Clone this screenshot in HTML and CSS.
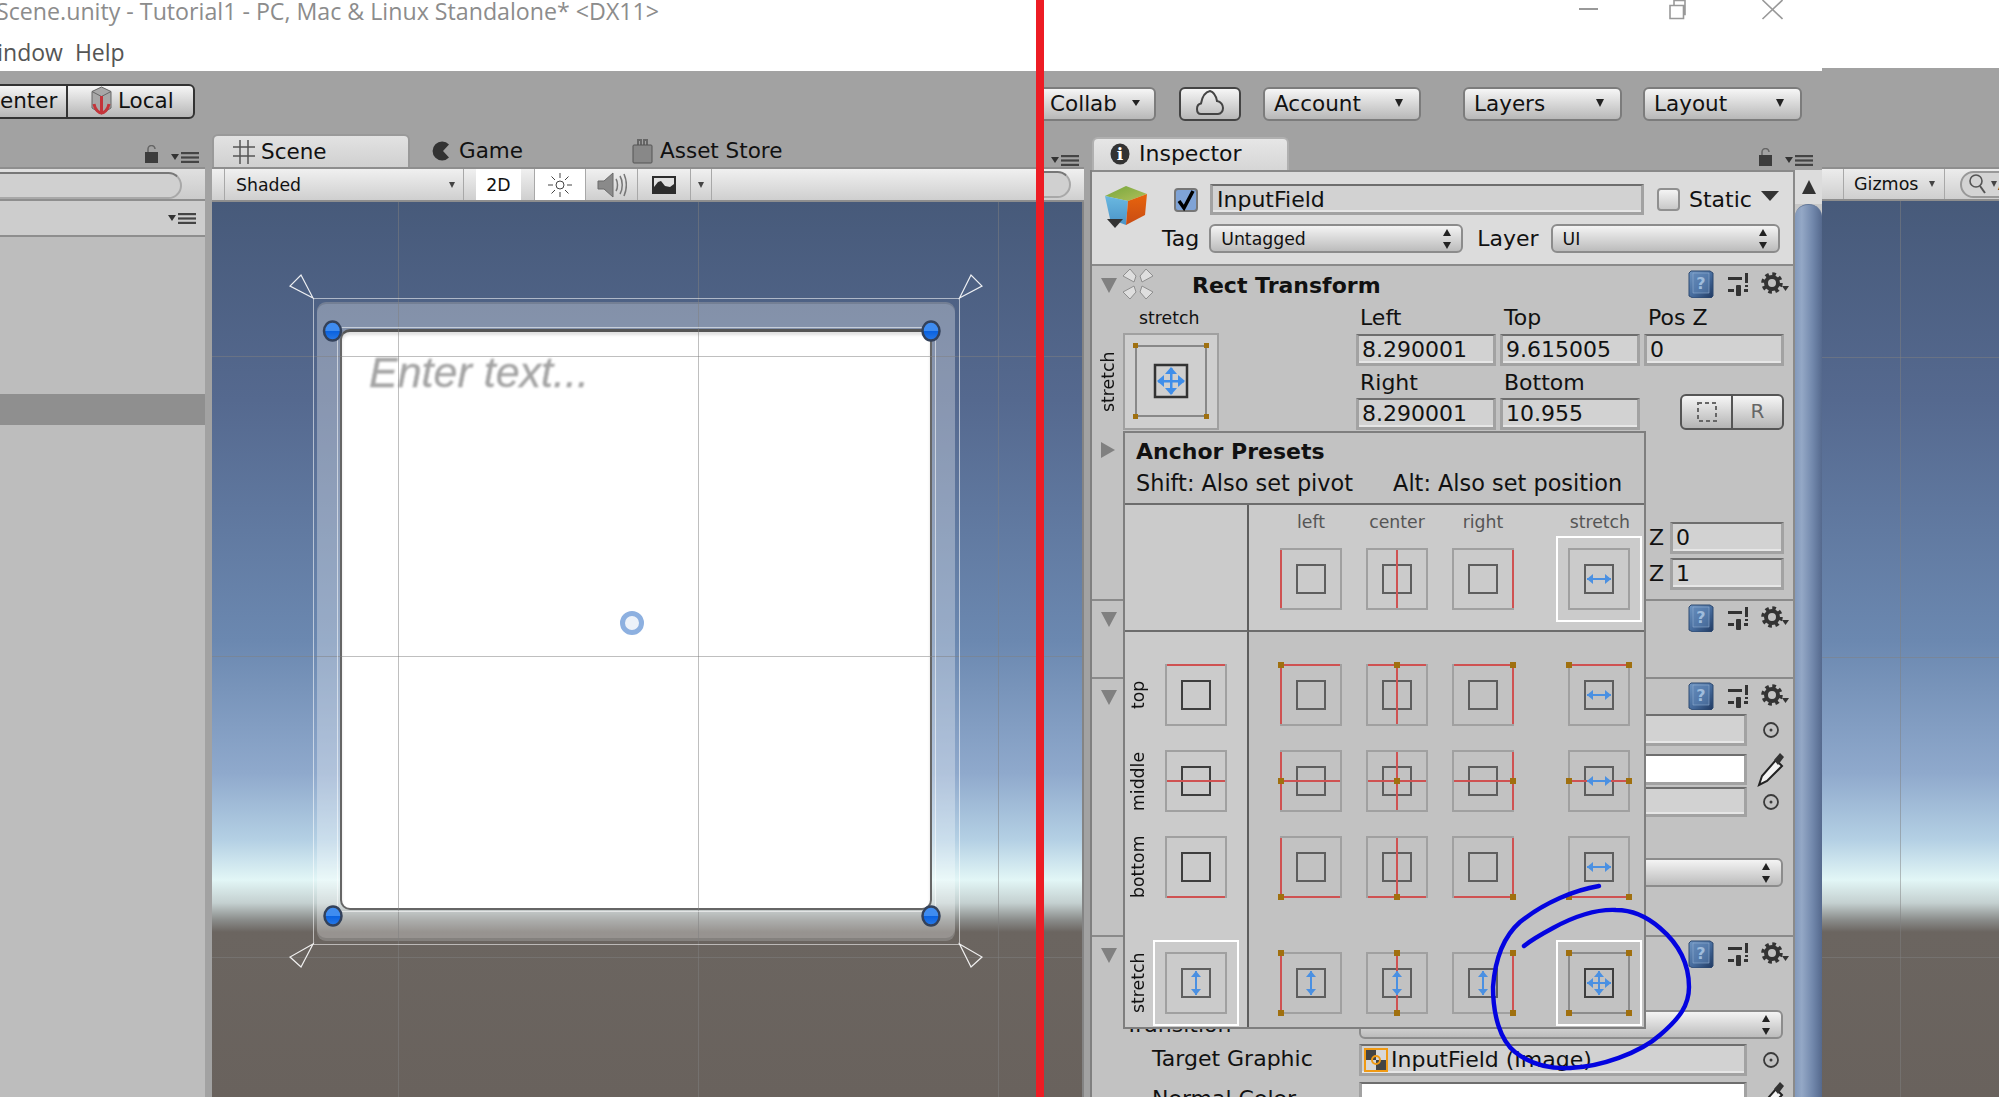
FILE: index.html
```html
<!DOCTYPE html>
<html lang="en">
<head>
<meta charset="utf-8">
<title>Unity Editor - Anchor Presets</title>
<link rel="stylesheet" href="styles.css">
</head>
<body>
<svg class="defs" width="0" height="0" aria-hidden="true">
  <defs>
    <linearGradient id="bookG" x1="0" y1="0" x2="1" y2="1"><stop offset="0" stop-color="#6f96c4"/><stop offset=".55" stop-color="#44699a"/><stop offset="1" stop-color="#1f3860"/></linearGradient>
    <linearGradient id="dotG" x1="0" y1="0" x2="0" y2="1"><stop offset="0" stop-color="#3f8cf0"/><stop offset=".5" stop-color="#3f8cf0"/><stop offset=".52" stop-color="#0a62e0"/><stop offset="1" stop-color="#2a7ae8"/></linearGradient>
    <linearGradient id="cubeT" x1="0" y1="0" x2="1" y2="1"><stop offset="0" stop-color="#76a63c"/><stop offset="1" stop-color="#b0c05a"/></linearGradient>
    <linearGradient id="cubeL" x1="0" y1="0" x2="0" y2="1"><stop offset="0" stop-color="#6ab8e0"/><stop offset="1" stop-color="#4a94c8"/></linearGradient>
    <linearGradient id="cubeR" x1="0" y1="0" x2="0" y2="1"><stop offset="0" stop-color="#e8640c"/><stop offset="1" stop-color="#c84c14"/></linearGradient>

    <g id="box"><rect x="7" y="7" width="60" height="60" fill="none" stroke="#a0a0a0" stroke-width="2"/></g>
    <g id="box2"><rect x="7" y="7" width="60" height="60" fill="none" stroke="#8c8c8c" stroke-width="2"/></g>
    <g id="inner"><rect x="23" y="23" width="28" height="28" fill="none" stroke="#5e5e5e" stroke-width="2"/></g>
    <g id="inner2"><rect x="23" y="23" width="28" height="28" fill="none" stroke="#3e3e3e" stroke-width="2"/></g>
    <rect id="vl" x="6" y="8" width="2" height="58" fill="#cf5252"/>
    <rect id="vc" x="36" y="8" width="2" height="58" fill="#cf5252"/>
    <rect id="vr" x="66" y="8" width="2" height="58" fill="#cf5252"/>
    <rect id="ht" x="8" y="6" width="58" height="2" fill="#cf5252"/>
    <rect id="hm" x="8" y="36" width="58" height="2" fill="#cf5252"/>
    <rect id="hb" x="8" y="66" width="58" height="2" fill="#cf5252"/>
    <rect id="p11" x="4" y="4" width="6" height="6" fill="#a0700f"/>
    <rect id="p21" x="34" y="4" width="6" height="6" fill="#a0700f"/>
    <rect id="p31" x="64" y="4" width="6" height="6" fill="#a0700f"/>
    <rect id="p12" x="4" y="34" width="6" height="6" fill="#a0700f"/>
    <rect id="p22" x="34" y="34" width="6" height="6" fill="#a0700f"/>
    <rect id="p32" x="64" y="34" width="6" height="6" fill="#a0700f"/>
    <rect id="p13" x="4" y="64" width="6" height="6" fill="#a0700f"/>
    <rect id="p23" x="34" y="64" width="6" height="6" fill="#a0700f"/>
    <rect id="p33" x="64" y="64" width="6" height="6" fill="#a0700f"/>
    <g id="ah" fill="#4a90e2"><rect x="25" y="36" width="24" height="2"/><polygon points="25,37 31,32 31,42"/><polygon points="49,37 43,32 43,42"/></g>
    <g id="av" fill="#4a90e2"><rect x="36" y="25" width="2" height="24"/><polygon points="37,25 32,31 42,31"/><polygon points="37,49 32,43 42,43"/></g>

    <symbol id="comp" viewBox="0 0 101 28">
      <path d="M3 1h19l3 2v23l-2 2H5l-4-2V3z" fill="url(#bookG)" stroke="#2f4a70"/>
      <path d="M5 3h16v20H5z" fill="#5f85b5" fill-opacity=".5" stroke="#9bb8da" stroke-opacity=".5"/>
      <text x="13" y="19" class="book-q">?</text>
      <rect x="40" y="7" width="14" height="3" fill="#333"/><rect x="57" y="3" width="3" height="10" fill="#333"/>
      <rect x="40" y="19" width="6" height="3" fill="#333"/><rect x="48" y="15" width="5" height="11" rx="1" fill="#333"/><rect x="56" y="19" width="4" height="3" fill="#333"/><rect x="57" y="15" width="3" height="2" fill="#333"/>
      <circle cx="84" cy="13" r="6" fill="none" stroke="#333" stroke-width="4"/>
      <circle cx="84" cy="13" r="9" fill="none" stroke="#333" stroke-width="3.5" stroke-dasharray="3.6 3.47"/>
      <polygon points="94,16 101,16 97.5,21" fill="#333"/>
    </symbol>
    <symbol id="menuI" viewBox="0 0 28 11">
      <polygon points="0,2 8,2 4,8" fill="#333"/>
      <rect x="10" y="0" width="18" height="2.200" fill="#444"/><rect x="10" y="4.400" width="18" height="2.200" fill="#444"/><rect x="10" y="8.800" width="18" height="2.200" fill="#444"/>
    </symbol>
    <symbol id="lockI" viewBox="0 0 15 18">
      <path d="M4 8V4a3.500 3.500 0 0 1 7 0" fill="none" stroke="#666" stroke-width="1.500"/>
      <rect x="1" y="7" width="13" height="11" fill="#3c3c3c"/>
    </symbol>
    <symbol id="updn" viewBox="0 0 10 20">
      <polygon points="5,0 9,7 1,7" fill="#222"/><polygon points="5,20 9,13 1,13" fill="#222"/>
    </symbol>
    <symbol id="dotI" viewBox="0 0 24 24">
      <circle cx="12" cy="12" r="7" fill="none" stroke="#3a3a3a" stroke-width="1.800"/><circle cx="12" cy="12" r="1.500" fill="#3a3a3a"/>
    </symbol>
    <symbol id="dropI" viewBox="0 0 28 36">
      <path d="M2 34l3-9 14-16 6 6-15 15z" fill="#f4f4f4" stroke="#222" stroke-width="2"/>
      <path d="M17 9l6-7 4 4-6 8z" fill="#333"/>
    </symbol>
    <symbol id="petal" viewBox="0 0 32 32">
      <g fill="#dedede" stroke="#8e8e8e" stroke-width="1">
        <polygon points="1,8 8,1 14,8 12,14"/><polygon points="31,8 24,1 18,8 20,14"/>
        <polygon points="1,24 8,31 14,24 12,18"/><polygon points="31,24 24,31 18,24 20,18"/>
      </g>
    </symbol>
  </defs>
</svg>

<header class="titlebar">
  <div class="title-row">
    <span class="title-text">Scene.unity - Tutorial1 - PC, Mac &amp; Linux Standalone* &lt;DX11&gt;</span>
    <svg class="winctl" viewBox="0 0 204 20" width="204" height="20">
      <rect x="0" y="8" width="19" height="2" fill="#999"/>
      <path d="M91 5.500h13.500v13H91zM95 5V0.500h11v14h-2" fill="none" stroke="#999" stroke-width="1.600"/>
      <path d="M183.500 0l20 19M203.500 0l-20 19" stroke="#999" stroke-width="1.600" fill="none"/>
    </svg>
  </div>
  <nav class="menu-row"><span>Window</span><span>Help</span></nav>
</header>

<section class="toolbar">
  <div class="tb-group tb-left">
    <div class="tb-seg tb-center">Center</div>
    <div class="tb-seg tb-local">
      <svg width="21" height="29" viewBox="0 0 21 29"><path d="M10.500 1L20 5.500V22L10.500 28 1 22V5.500z" fill="#a8a8a8" stroke="#666"/><path d="M1 5.500l9.500 5 9.500-5M10.500 10.500V28" fill="none" stroke="#666"/><path d="M10.500 10V27M3 18c1 6 5 9 7.500 9s6.500-3 7.500-9" fill="none" stroke="#c4343a" stroke-width="3"/></svg>
      <span>Local</span>
    </div>
  </div>
  <div class="tb-right">
    <div class="tb-btn tb-collab"><span>Collab</span><i class="tri tri-sm"></i></div>
    <div class="tb-btn tb-cloud"><svg width="30" height="28" viewBox="0 0 30 28"><path d="M6 25c-3 0-4-2-4-5 0-3 1.500-5 4-5.500C7 9 10 3 15 2c4 1 6 5 7 10 4 .5 6 4 6 7 0 3-2 6-5 6z" fill="none" stroke="#444" stroke-width="2"/></svg></div>
    <div class="tb-btn tb-account"><span>Account</span><i class="tri"></i></div>
    <div class="tb-btn tb-layers"><span>Layers</span><i class="tri"></i></div>
    <div class="tb-btn tb-layout"><span>Layout</span><i class="tri"></i></div>
  </div>
</section>

<main class="workspace">
  <aside class="hierarchy">
    <div class="h-strip">
      <svg width="15" height="18"><use href="#lockI"/></svg>
      <svg width="28" height="11"><use href="#menuI"/></svg>
    </div>
    <div class="h-search"><div class="pill"></div></div>
    <div class="h-head"><svg width="28" height="11"><use href="#menuI"/></svg></div>
    <div class="h-list"><div class="h-selected"></div></div>
  </aside>

  <section class="scene-panel">
    <div class="tab-strip">
      <div class="tab tab-active">
        <svg width="22" height="24" viewBox="0 0 22 24"><path d="M7 0v24M15 0v24M0 7h22M0 16h22" stroke="#555" stroke-width="1.500" fill="none"/></svg>
        <span>Scene</span>
      </div>
      <div class="tab tab-game">
        <svg width="17" height="20" viewBox="0 0 17 20"><path d="M17 3.500A9.500 9.500 0 1 0 17 16.500L11 10z" fill="#333"/></svg>
        <span>Game</span>
      </div>
      <div class="tab tab-store">
        <svg width="21" height="26" viewBox="0 0 21 26"><path d="M6 7V2h3v5M12 7V2h3v5" fill="none" stroke="#666" stroke-width="2"/><rect x="1" y="7" width="19" height="18" rx="1" fill="#888" stroke="#555"/></svg>
        <span>Asset Store</span>
      </div>
      <svg class="strip-menu" width="28" height="11"><use href="#menuI"/></svg>
    </div>
    <div class="scene-tools">
      <div class="st-shaded"><span>Shaded</span><i class="tri tri-xs"></i></div>
      <div class="st-2d">2D</div>
      <div class="st-sun"><svg width="26" height="26" viewBox="0 0 26 26"><circle cx="13" cy="13" r="4" fill="none" stroke="#444"/><path d="M13 1v5M13 20v5M1 13h5M20 13h5M4.500 4.500l3.500 3.500M18 18l3.500 3.500M4.500 21.500L8 18M18 8l3.500-3.500" stroke="#444" fill="none"/></svg></div>
      <div class="st-sound"><svg width="30" height="28" viewBox="0 0 30 28"><path d="M1 10h6l9-8v24l-9-8H1z" fill="#8a8a8a" stroke="#6a6a6a"/><path d="M19 8c2 3 2 9 0 12M23 5c3 5 3 13 0 18M27 3c3 7 3 15 0 22" fill="none" stroke="#777" stroke-width="1.500"/></svg></div>
      <div class="st-img"><svg width="24" height="18" viewBox="0 0 24 18"><rect width="24" height="18" fill="#2c2c2c"/><path d="M2 2h20v6l-4 3-5-1-4-5-3 1-4 5z" fill="#e0e0e0"/></svg></div>
      <div class="st-arrow"><i class="tri tri-xs"></i></div>
      <div class="pill pill-end"></div>
    </div>
    <div class="canvas sky scene-canvas">
      <div class="frame"></div>
      <div class="field"></div>
      <div class="placeholder">Enter text...</div>
      <svg class="overlay" width="872" height="895" viewBox="212 202 872 895">
        <g stroke="#808080" stroke-opacity=".5" stroke-width="1" fill="none">
          <path d="M398.500 202V1097M698.500 202V1097M998.500 202V1097"/>
          <path d="M212 356.500H1084M212 656.500H1084M212 957.500H1084"/>
        </g>
        <rect x="313.500" y="298.500" width="646" height="646" fill="none" stroke="#fff" stroke-opacity=".55"/>
        <rect x="337.500" y="327.500" width="598" height="584" fill="none" stroke="#fff" stroke-opacity=".55"/>
        <g fill="none" stroke="#fff" stroke-opacity=".9" stroke-width="1.200">
          <polygon points="313,298 290,286 301,275"/><polygon points="959.500,298 982,286 971,275"/>
          <polygon points="313,944 290,957 301,967"/><polygon points="959.500,944 982,957 971,967"/>
        </g>
        <g fill="url(#dotG)" stroke="#33415a" stroke-width="2.500">
          <ellipse cx="332.500" cy="331" rx="8.500" ry="9.500"/><ellipse cx="931" cy="331" rx="8.500" ry="9.500"/>
          <ellipse cx="333" cy="916" rx="8.500" ry="9.500"/><ellipse cx="931" cy="916" rx="8.500" ry="9.500"/>
        </g>
        <circle class="pivot" cx="632" cy="623" r="9.500" fill="#dce6f4" fill-opacity=".5" stroke="#8db0e0" stroke-width="5"/>
      </svg>
    </div>
  </section>

  <section class="inspector-panel">
    <div class="tab-strip insp-strip">
      <div class="tab tab-insp">
        <svg width="20" height="22" viewBox="0 0 20 22"><ellipse cx="10" cy="11" rx="9.500" ry="10.500" fill="#333"/><text x="10" y="17" class="i-glyph">i</text></svg>
        <span>Inspector</span>
      </div>
      <svg class="insp-lock" width="15" height="18"><use href="#lockI"/></svg>
      <svg class="insp-menu" width="28" height="11"><use href="#menuI"/></svg>
    </div>
    <div class="insp-body">
      <div class="insp-main">
        <div class="obj">
          <svg class="cube" width="42" height="42" viewBox="0 0 42 42">
            <polygon points="21,0 42,8 23,15 0,10" fill="url(#cubeT)"/>
            <polygon points="0,10 23,15 21,39 5,33" fill="url(#cubeL)"/>
            <polygon points="23,15 42,8 40,29 21,39" fill="url(#cubeR)"/>
            <polygon points="2,33 18,33 10,42" fill="#333"/>
          </svg>
          <div class="obj-rows">
            <div class="obj-r1">
              <div class="check"><svg width="20" height="22" viewBox="0 0 20 22"><path d="M3 12l5 7L17 2" fill="none" stroke="#000" stroke-width="3.500"/></svg></div>
              <div class="fld fld-name">InputField</div>
              <div class="static-box"></div>
              <span class="static-label">Static</span>
              <i class="tri tri-lg"></i>
            </div>
            <div class="obj-r2">
              <span>Tag</span>
              <div class="pop pop-tag"><span>Untagged</span><svg width="10" height="20"><use href="#updn"/></svg></div>
              <span class="lbl-layer">Layer</span>
              <div class="pop pop-layer"><span>UI</span><svg width="10" height="20"><use href="#updn"/></svg></div>
            </div>
          </div>
        </div>

        <section class="sec sec-rt">
          <div class="sec-h">
            <i class="arrow-d"></i>
            <svg class="petals" width="32" height="32"><use href="#petal"/></svg>
            <strong class="sec-title">Rect Transform</strong>
            <svg class="comp" width="101" height="28"><use href="#comp"/></svg>
          </div>
          <div class="rt-body">
            <div class="rt-anchor">
              <span class="rt-top-lbl">stretch</span>
              <div class="rt-anchor-row">
                <span class="rot rt-rot">stretch</span>
                <div class="anchor-btn">
                  <svg width="92" height="92" viewBox="0 0 92 92">
                    <rect x="11" y="11" width="70" height="70" fill="none" stroke="#888" stroke-width="2"/>
                    <g fill="#a0700f"><rect x="8" y="8" width="5" height="5"/><rect x="79" y="8" width="5" height="5"/><rect x="8" y="79" width="5" height="5"/><rect x="79" y="79" width="5" height="5"/></g>
                    <rect x="30" y="30" width="32" height="32" fill="none" stroke="#333" stroke-width="2.500"/>
                    <g fill="#3f8eea"><rect x="33" y="45" width="26" height="2.500"/><rect x="45" y="33" width="2.500" height="26"/><polygon points="32,46 39,40 39,52"/><polygon points="60,46 53,40 53,52"/><polygon points="46,32 40,39 52,39"/><polygon points="46,60 40,53 52,53"/></g>
                  </svg>
                </div>
              </div>
            </div>
            <div class="rt-grid">
              <span class="rt-l">Left</span><span class="rt-l">Top</span><span class="rt-l">Pos Z</span>
              <div class="fld">8.290001</div><div class="fld">9.615005</div><div class="fld">0</div>
              <span class="rt-l">Right</span><span class="rt-l">Bottom</span>
              <div class="blueprint"><div class="bp-a"><svg width="20" height="20" viewBox="0 0 20 20"><rect x="1" y="1" width="18" height="18" fill="none" stroke="#666" stroke-width="2" stroke-dasharray="4 3"/></svg></div><div class="bp-b">R</div></div>
              <div class="fld fld-r4a">8.290001</div><div class="fld fld-r4b">10.955</div>
            </div>
          </div>
          <div class="z-rows">
            <div class="z-row"><span>Z</span><div class="fld">0</div></div>
            <div class="z-row"><span>Z</span><div class="fld">1</div></div>
          </div>
        </section>

        <section class="sec sec-2">
          <div class="sec-h"><i class="arrow-d"></i><svg class="comp" width="101" height="28"><use href="#comp"/></svg></div>
        </section>

        <section class="sec sec-3">
          <div class="sec-h"><i class="arrow-d"></i><svg class="comp" width="101" height="28"><use href="#comp"/></svg></div>
          <div class="frow f714"><span></span><div class="fld fld-h32"></div><svg class="ic" width="24" height="24"><use href="#dotI"/></svg></div>
          <div class="frow f751"><span></span><div class="fld fld-h31 fld-white"></div><svg class="ic" width="28" height="36"><use href="#dropI"/></svg></div>
          <div class="frow f787"><span></span><div class="fld fld-h30"></div><svg class="ic" width="24" height="24"><use href="#dotI"/></svg></div>
          <div class="frow f858"><span></span><div class="pop pop-wide"><svg width="10" height="20"><use href="#updn"/></svg></div></div>
        </section>

        <section class="sec sec-4">
          <div class="sec-h"><i class="arrow-d"></i><svg class="comp" width="101" height="28"><use href="#comp"/></svg></div>
          <div class="frow f1010"><span class="lbl-trans">Transition</span><div class="pop pop-wide"><svg width="10" height="20"><use href="#updn"/></svg></div></div>
          <div class="frow f1044"><span class="lbl-tg">Target Graphic</span>
            <div class="fld fld-h32 fld-obj">
              <svg class="img-ic" width="24" height="24" viewBox="0 0 24 24"><rect x="1" y="1" width="22" height="22" fill="#d8d8d8" stroke="#f09a14" stroke-width="2"/><rect x="2" y="2" width="10" height="10" fill="#444"/><rect x="12" y="12" width="10" height="10" fill="#444"/><circle cx="12" cy="12" r="4" fill="none" stroke="#f09a14" stroke-width="2"/></svg>
              <span>InputField (Image)</span>
            </div>
            <svg class="ic" width="24" height="24"><use href="#dotI"/></svg></div>
          <div class="frow f1080"><span class="lbl-tg">Normal Color</span><div class="fld fld-h32 fld-white"></div><svg class="ic" width="28" height="36"><use href="#dropI"/></svg></div>
        </section>

        <div class="side-arrow"><i class="arrow-r"></i></div>

        <div class="presets">
          <div class="pr-head">
            <strong>Anchor Presets</strong>
            <div class="pr-sub"><span>Shift: Also set pivot</span><span>Alt: Also set position</span></div>
          </div>
          <div class="pr-grid">
            <div class="pr-corner"></div>
            <div class="pr-cols">
              <div class="pr-col"><span>left</span><svg class="c" viewBox="0 0 74 74"><use href="#box"/><use href="#vl"/><use href="#inner"/></svg></div>
              <div class="pr-col"><span>center</span><svg class="c" viewBox="0 0 74 74"><use href="#box"/><use href="#inner"/><use href="#vc"/></svg></div>
              <div class="pr-col"><span>right</span><svg class="c" viewBox="0 0 74 74"><use href="#box"/><use href="#vr"/><use href="#inner"/></svg></div>
              <div class="pr-col"><span>stretch</span><svg class="c sel" viewBox="0 0 74 74"><use href="#box"/><use href="#inner"/><use href="#ah"/></svg></div>
            </div>
            <div class="pr-rows">
              <div class="pr-row"><span class="rot">top</span><svg class="c" viewBox="0 0 74 74"><use href="#box"/><use href="#ht"/><use href="#inner2"/></svg></div>
              <div class="pr-row"><span class="rot">middle</span><svg class="c" viewBox="0 0 74 74"><use href="#box"/><use href="#inner2"/><use href="#hm"/></svg></div>
              <div class="pr-row"><span class="rot">bottom</span><svg class="c" viewBox="0 0 74 74"><use href="#box"/><use href="#hb"/><use href="#inner2"/></svg></div>
              <div class="pr-row pr-row-last"><span class="rot">stretch</span><svg class="c sel" viewBox="0 0 74 74"><use href="#box"/><use href="#inner"/><use href="#av"/></svg></div>
            </div>
            <div class="pr-main">
              <svg class="c" viewBox="0 0 74 74"><use href="#box"/><use href="#vl"/><use href="#ht"/><use href="#inner"/><use href="#p11"/></svg>
              <svg class="c" viewBox="0 0 74 74"><use href="#box"/><use href="#ht"/><use href="#inner"/><use href="#vc"/><use href="#p21"/></svg>
              <svg class="c" viewBox="0 0 74 74"><use href="#box"/><use href="#ht"/><use href="#vr"/><use href="#inner"/><use href="#p31"/></svg>
              <svg class="c" viewBox="0 0 74 74"><use href="#box"/><use href="#ht"/><use href="#inner"/><use href="#ah"/><use href="#p11"/><use href="#p31"/></svg>

              <svg class="c" viewBox="0 0 74 74"><use href="#box"/><use href="#vl"/><use href="#inner"/><use href="#hm"/><use href="#p12"/></svg>
              <svg class="c" viewBox="0 0 74 74"><use href="#box"/><use href="#inner"/><use href="#vc"/><use href="#hm"/><use href="#p22"/></svg>
              <svg class="c" viewBox="0 0 74 74"><use href="#box"/><use href="#vr"/><use href="#inner"/><use href="#hm"/><use href="#p32"/></svg>
              <svg class="c" viewBox="0 0 74 74"><use href="#box"/><use href="#inner"/><use href="#hm"/><use href="#ah"/><use href="#p12"/><use href="#p32"/></svg>

              <svg class="c" viewBox="0 0 74 74"><use href="#box"/><use href="#vl"/><use href="#hb"/><use href="#inner"/><use href="#p13"/></svg>
              <svg class="c" viewBox="0 0 74 74"><use href="#box"/><use href="#hb"/><use href="#inner"/><use href="#vc"/><use href="#p23"/></svg>
              <svg class="c" viewBox="0 0 74 74"><use href="#box"/><use href="#hb"/><use href="#vr"/><use href="#inner"/><use href="#p33"/></svg>
              <svg class="c" viewBox="0 0 74 74"><use href="#box"/><use href="#hb"/><use href="#inner"/><use href="#ah"/><use href="#p13"/><use href="#p33"/></svg>

              <svg class="c" viewBox="0 0 74 74"><use href="#box"/><use href="#vl"/><use href="#inner"/><use href="#av"/><use href="#p11"/><use href="#p13"/></svg>
              <svg class="c" viewBox="0 0 74 74"><use href="#box"/><use href="#inner"/><use href="#vc"/><use href="#av"/><use href="#p21"/><use href="#p23"/></svg>
              <svg class="c" viewBox="0 0 74 74"><use href="#box"/><use href="#vr"/><use href="#inner"/><use href="#av"/><use href="#p31"/><use href="#p33"/></svg>
              <svg class="c sel" viewBox="0 0 74 74"><use href="#box2"/><use href="#inner2"/><use href="#ah"/><use href="#av"/><use href="#p11"/><use href="#p31"/><use href="#p13"/><use href="#p33"/></svg>
            </div>
          </div>
        </div>
      </div>
      <div class="scrollbar">
        <div class="sb-up"><i class="sb-tri"></i></div>
        <div class="sb-thumb"></div>
      </div>
    </div>
  </section>

  <section class="scene-right">
    <div class="sr-strip"></div>
    <div class="sr-tools">
      <div class="sr-giz"><span>Gizmos</span><i class="tri tri-xs"></i></div>
      <div class="sr-search"><svg width="22" height="22" viewBox="0 0 22 22"><circle cx="8" cy="8" r="6" fill="none" stroke="#555" stroke-width="1.600"/><path d="M12 13l5 7" stroke="#555" stroke-width="2"/></svg><i class="tri tri-xs"></i><span>A</span></div>
    </div>
    <div class="canvas sky">
      <svg class="overlay" width="177" height="896" viewBox="1822 201 177 896">
        <g stroke="#808080" stroke-opacity=".5" fill="none"><path d="M1900.500 201V1097M1822 357.500H1999M1822 657.500H1999M1822 957.500H1999"/></g>
      </svg>
    </div>
  </section>
</main>

<div class="redline"></div>
<svg class="annot" width="1999" height="1097" viewBox="0 0 1999 1097" aria-hidden="true">
  <path d="M1599 886C1575 890 1545 902 1520 922 1503 937 1495 960 1493 987 1493 1015 1500 1040 1515 1052 1530 1064 1550 1069 1570 1068 1600 1067 1640 1053 1660 1035 1680 1018 1689 1005 1689 987 1689 965 1680 945 1660 928 1645 915 1630 910 1616 910 1595 909 1575 916 1553 928 1540 935 1530 941 1524 946" fill="none" stroke="#0404e0" stroke-width="4.400" stroke-linecap="round"/>
</svg>
</body>
</html>
```
FILE: styles.css
```css
* { box-sizing: border-box; }
html, body { margin: 0; padding: 0; }
body {
  position: relative;
  width: 1999px;
  height: 1097px;
  overflow: hidden;
  background: #a2a2a2;
  font-family: "DejaVu Sans", sans-serif;
  font-size: 22px;
  color: #111;
  display: flex;
  flex-direction: column;
}
.defs { position: absolute; }
i { display: inline-block; font-style: normal; }
svg { display: block; flex: none; }

/* ---------- title bar ---------- */
.titlebar { height: 68px; background: #fff; overflow: hidden; flex: none; }
.title-row { height: 30px; display: flex; align-items: flex-start; }
.title-text {
  font-family: "Open Sans", sans-serif;
  font-size: 23.2px;
  line-height: 22px;
  margin-left: -4px;
  color: #8c8c8c;
  white-space: nowrap;
}
.winctl { margin-left: auto; margin-right: 216px; }
.menu-row {
  margin-left: -24px;
  display: flex;
  gap: 12px;
  font-family: "Open Sans", sans-serif;
  font-size: 23px;
  line-height: 28px;
  color: #555;
  margin-top: 8px;
}

/* ---------- main toolbar ---------- */
.toolbar {
  height: 66px;
  flex: none;
  display: flex;
  align-items: flex-start;
  background: linear-gradient(#fff, #fff) 0 0 / 1822px 3px no-repeat, #a2a2a2;
  font-size: 21.5px;
}
.tb-group {
  display: flex;
  height: 35px;
  margin-top: 16px;
  margin-left: -25px;
  border: 2px solid #333;
  border-radius: 6px;
  background: linear-gradient(#f6f6f6, #b6b6b6);
}
.tb-seg { display: flex; align-items: center; height: 100%; padding-bottom: 2px; }
.tb-center { width: 91px; padding-left: 8px; border-right: 2px solid #333; }
.tb-local { width: 125px; padding-left: 23px; gap: 6px; }
.tb-right { margin-left: auto; margin-right: 197px; margin-top: 19px; display: flex; }
.tb-btn {
  height: 34px;
  padding-bottom: 2px;
  display: flex;
  align-items: center;
  justify-content: space-between;
  border: 2px solid #7c7c7c;
  border-radius: 6px;
  background: linear-gradient(#f6f6f6, #b8b8b8);
}
.tb-collab { width: 116px; padding: 0 14px 2px 8px; border-radius: 0 6px 6px 0; }
.tb-cloud { width: 62px; margin-left: 23px; justify-content: center; border-color: #444; }
.tb-account { width: 158px; margin-left: 22px; padding: 0 16px 2px 9px; }
.tb-layers { width: 159px; margin-left: 42px; padding: 0 16px 2px 9px; }
.tb-layout { width: 159px; margin-left: 21px; padding: 0 16px 2px 9px; }
.tri { width: 0; height: 0; border-left: 4.5px solid transparent; border-right: 4.5px solid transparent; border-top: 8px solid #222; }
.tri-sm { border-left-width: 4px; border-right-width: 4px; border-top-width: 6px; }
.tri-xs { border-left-width: 3.5px; border-right-width: 3.5px; border-top-width: 6px; border-top-color: #444; }
.tri-lg { border-left-width: 9px; border-right-width: 9px; border-top-width: 10px; border-top-color: #333; margin-left: 9px; margin-top: -8px; }

/* ---------- workspace ---------- */
.workspace { flex: 1; min-height: 0; display: flex; }
.tab-strip { height: 33px; display: flex; align-items: flex-end; }
.tab { height: 33px; display: flex; align-items: center; font-size: 21.5px; }
.tab-active {
  width: 198px;
  padding-left: 19px;
  gap: 6px;
  background: linear-gradient(#e2e2e2, #d0d0d0);
  border: 2px solid #999;
  border-bottom: 0;
  border-radius: 6px 6px 0 0;
}
.tab-game { margin-left: 22px; gap: 10px; }
.tab-store { margin-left: 109px; gap: 7px; }
.strip-menu { margin-left: auto; margin-right: 5px; margin-bottom: 1px; }
.scene-panel { width: 872px; margin-left: 7px; display: flex; flex-direction: column; }

/* hierarchy */
.hierarchy { width: 205px; display: flex; flex-direction: column; }
.h-strip { height: 33px; display: flex; align-items: flex-end; justify-content: flex-end; padding: 0 6px 4px 0; gap: 12px; }
.h-search {
  height: 34px;
  padding-top: 3px;
  background: linear-gradient(#e0e0e0, #cbcbcb);
  border-top: 2px solid #8e8e8e;
  border-bottom: 2px solid #8e8e8e;
  overflow: hidden;
}
.pill {
  height: 27px;
  border-radius: 14px;
  border: 2px solid #a8a8a8;
  border-top-color: #777;
  background: #d0d0d0;
}
.h-search .pill { width: 212px; margin-left: -30px; }
.h-head { height: 36px; background: #cdcdcd; border-bottom: 2px solid #8e8e8e; display: flex; align-items: center; justify-content: flex-end; padding-right: 9px; }
.h-list { flex: 1; background: #bdbdbd; padding-top: 157px; }
.h-selected { height: 31px; background: #8f8f8f; }

/* scene toolbar */
.scene-tools {
  height: 35px;
  display: flex;
  align-items: stretch;
  padding-left: 12px;
  font-size: 17.3px;
  background: linear-gradient(#f0f0f0, #cfcfcf);
  border-top: 2px solid #8e8e8e;
  border-bottom: 2px solid #8e8e8e;
}
.st-shaded { width: 240px; padding: 0 8px 0 11px; border-left: 1px solid #a8a8a8; border-right: 1px solid #a8a8a8; display: flex; align-items: center; justify-content: space-between; }
.st-2d { width: 45px; margin-left: 12px; background: #fff; display: flex; align-items: center; justify-content: center; }
.st-sun { width: 51px; margin-left: 13px; background: #fff; display: flex; align-items: center; justify-content: center; border-left: 1px solid #a8a8a8; }
.st-sound { width: 53px; display: flex; align-items: center; justify-content: center; border-left: 1px solid #a8a8a8; border-right: 1px solid #a8a8a8; }
.st-img { width: 52px; display: flex; align-items: center; justify-content: center; }
.st-arrow { width: 22px; display: flex; align-items: center; justify-content: center; border-left: 1px solid #a8a8a8; border-right: 1px solid #a8a8a8; }
.pill-end { width: 32px; margin: 2px 13px 2px auto; border-radius: 0 14px 14px 0; }

/* scene canvas */
.canvas { position: relative; flex: 1; overflow: hidden; }
.sky {
  background-attachment: fixed;
  background-image: linear-gradient(180deg,
    #475a7a 0, #475a7a 202px, #55698f 400px, #6b88b0 640px, #8fa9cc 773px,
    #b4d0e4 840px, #e2f6f6 880px, #c4d0d0 903px, #8a8c8a 920px,
    #6b6560 932px, #69625d 1097px);
}
.scene-canvas { border-right: 2px solid #848484; }
.frame { position: absolute; left: 105px; top: 100px; width: 638px; height: 639px; border-radius: 9px; background: rgba(255,255,255,.3); box-shadow: inset 0 2px 0 rgba(0,0,0,.12), inset 0 -3px 0 rgba(0,0,0,.12); }
.field { position: absolute; left: 128px; top: 127px; width: 592px; height: 581px; background: #fff; border: 2px solid #666; border-top: 3px solid #555; border-radius: 10px; box-shadow: inset 0 3px 3px rgba(0,0,0,.12); }
.placeholder { position: absolute; left: 157px; top: 145px; font-family: "Liberation Sans", sans-serif; font-style: italic; font-size: 43px; line-height: 50px; color: #a4a4a4; -webkit-text-stroke: .4px #a4a4a4; filter: blur(1px); white-space: nowrap; }
.overlay { position: absolute; left: 0; top: 0; }
.pivot { filter: blur(.6px); }

/* inspector */
.inspector-panel { width: 730px; margin-left: 8px; display: flex; flex-direction: column; }
.insp-strip { height: 36px; padding-right: 9px; }
.tab-insp {
  width: 197px;
  height: 33px;
  padding-left: 16px;
  padding-bottom: 2px;
  gap: 9px;
  font-size: 22px;
  background: linear-gradient(#e6e6e6, #d6d6d6);
  border: 2px solid #b0b0b0;
  border-bottom: 0;
  border-radius: 6px 6px 0 0;
}
.insp-lock { margin-left: auto; margin-right: 12px; margin-bottom: 4px; }
.insp-menu { margin-bottom: 4px; }
.insp-body { flex: 1; min-height: 0; display: flex; }
.insp-main { position: relative; width: 701px; display: flex; flex-direction: column; background: #c2c2c2; border-top: 2px solid #8a8a8a; box-shadow: -2px 0 0 #808080; }
.obj { height: 92px; flex: none; display: flex; background: #dcdcdc; padding-top: 12px; }
.cube { position: relative; margin: 2px 0 0 13px; }
.obj-rows { margin-left: 15px; display: flex; flex-direction: column; gap: 9px; }
.obj-r1 { height: 31px; display: flex; align-items: center; padding-left: 12px; }
.check { width: 24px; height: 24px; border: 2px solid #777; border-radius: 4px; background: #7fa3d6; display: flex; align-items: center; justify-content: center; }
.fld {
  height: 32px;
  padding-left: 3px;
  font-size: 22px;
  line-height: 27px;
  border: 3px solid #a2a2a2;
  border-top: 2px solid #6e6e6e;
  background: #d2d2d2;
  box-shadow: inset 0 -2px 0 #e6e6e6;
  white-space: nowrap;
  overflow: hidden;
}
.fld-name { width: 434px; height: 31px; margin-left: 12px; padding-left: 4px; }
.static-box { width: 23px; height: 23px; margin-left: 13px; border: 2px solid #909090; border-radius: 4px; background: linear-gradient(#f4f4f4, #c8c8c8); }
.static-label { margin-left: 9px; }
.obj-r2 { height: 29px; display: flex; align-items: center; }
.pop {
  height: 29px;
  display: flex;
  align-items: center;
  justify-content: space-between;
  font-size: 17.3px;
  border: 2px solid #8c8c8c;
  border-radius: 6px;
  background: linear-gradient(#f4f4f4, #bcbcbc);
}
.pop-tag { width: 254px; margin-left: 10px; padding: 0 9px 0 10px; }
.lbl-layer { margin-left: 14px; }
.pop-layer { width: 229px; margin-left: 12px; padding: 0 10px 0 10px; }

.sec { border-top: 2px solid #8a8a8a; flex: none; }
.sec-h { display: flex; align-items: center; height: 34px; padding: 0 4px 0 9px; }
.sec-rt { height: 335px; }
.sec-rt .sec-h { height: 36px; }
.arrow-d { width: 0; height: 0; margin-top: 2px; border-left: 8px solid transparent; border-right: 8px solid transparent; border-top: 15px solid #808080; }
.arrow-r { width: 0; height: 0; border-top: 8px solid transparent; border-bottom: 8px solid transparent; border-left: 14px solid #808080; }
.side-arrow { position: absolute; left: 9px; top: 266px; }
.petals { margin-left: 5px; }
.sec-title { margin-left: 38px; margin-top: 2px; font-size: 22px; }
.comp { margin-left: auto; }

.rt-body { display: flex; padding-top: 3px; }
.rt-anchor { width: 264px; padding-left: 8px; }
.rt-top-lbl { display: block; margin-left: 39px; font-size: 17.3px; line-height: 24px; padding-top: 1px; }
.rt-anchor-row { display: flex; margin-top: 3px; }
.rot { writing-mode: vertical-rl; transform: rotate(180deg); text-align: center; font-size: 17.3px; white-space: nowrap; }
.rt-rot { width: 16px; height: 97px; line-height: 16px; margin-right: 7px; }
.anchor-btn { width: 96px; height: 97px; background: #cfcfcf; border: 2px solid #a0a0a0; }
.rt-grid {
  display: grid;
  grid-template-columns: 140px 140px 140px;
  grid-template-rows: 29px 36px 28px 32px;
  column-gap: 4px;
}
.rt-l { padding-left: 4px; padding-top: 1px; line-height: 24px; white-space: nowrap; }
.blueprint {
  grid-column: 3;
  grid-row: 3 / 5;
  align-self: end;
  justify-self: end;
  width: 104px;
  height: 36px;
  display: flex;
  border: 2px solid #555;
  border-radius: 6px;
  background: linear-gradient(#f6f6f6, #b4b4b4);
  color: #666;
}
.bp-a { width: 51px; display: flex; align-items: center; justify-content: center; border-right: 2px solid #555; }
.bp-b { flex: 1; text-align: center; line-height: 31px; font-size: 20px; }
.fld-r4a { grid-column: 1; grid-row: 4; }
.fld-r4b { grid-column: 2; grid-row: 4; }
.z-rows { margin-top: 92px; display: flex; flex-direction: column; gap: 4px; padding-right: 9px; }
.z-row { display: flex; justify-content: flex-end; align-items: center; gap: 6px; }
.z-row span { line-height: 32px; }
.z-row .fld { width: 114px; }

.sec-2 { height: 78px; }
.sec-3 { height: 258px; }
.sec-4 { flex: 1; overflow: hidden; }
.frow { display: grid; grid-template-columns: 267px 388px 47px; align-items: center; white-space: nowrap; }
.frow .ic { justify-self: center; }
.frow .pop-wide { grid-column: 2 / 4; width: 424px; padding: 0 10px 0 0; justify-content: flex-end; height: 29px; }
.f714 { margin-top: 1px; height: 32px; }
.f751 { margin-top: 5px; height: 31px; }
.f787 { margin-top: 5px; height: 30px; }
.f858 { margin-top: 41px; height: 29px; }
.f1010 { margin-top: 39px; height: 27px; }
.f1044 { margin-top: 7px; height: 31px; line-height: 27px; }
.f1044 .lbl-tg { margin-top: -3px; }
.f1080 { margin-top: 5px; height: 32px; }
.fld-h32 { height: 32px; }
.fld-h31 { height: 31px; }
.fld-h30 { height: 30px; }
.fld-white { background: #fff; box-shadow: none; }
.fld-obj { display: flex; align-items: center; gap: 3px; padding-left: 2px; }
.lbl-trans { padding-left: 33px; }
.lbl-tg { padding-left: 60px; }
.book-q { font-family: "DejaVu Sans", sans-serif; font-size: 16px; font-weight: 700; fill: #9fbcdc; text-anchor: middle; }
.i-glyph { font-family: "DejaVu Serif", serif; font-size: 17px; font-weight: 700; fill: #fff; text-anchor: middle; }

/* anchor presets popup */
.presets {
  position: absolute;
  left: 31px;
  top: 259px;
  width: 523px;
  height: 598px;
  display: flex;
  flex-direction: column;
  background: #c2c2c2;
  border: 2px solid #7e7e7e;
}
.pr-head { height: 72px; flex: none; padding: 6px 0 0 11px; border-bottom: 2px solid #6c6c6c; }
.pr-head strong { display: block; line-height: 26px; }
.pr-sub { display: flex; gap: 40px; margin-top: 5px; font-size: 22.4px; line-height: 26px; white-space: nowrap; }
.pr-grid { flex: 1; display: grid; grid-template-columns: 124px 1fr; grid-template-rows: 127px 1fr; }
.pr-corner { background: #cbcbcb; border-right: 2px solid #5e5e5e; border-bottom: 2px solid #6c6c6c; }
.pr-cols {
  display: grid;
  grid-template-columns: 74px 74px 74px 104px;
  column-gap: 12px;
  padding: 5px 0 0 25px;
  background: #cbcbcb;
  border-bottom: 2px solid #6c6c6c;
}
.pr-col { display: flex; flex-direction: column; align-items: center; }
.pr-col:last-child { align-items: flex-end; }
.pr-col span { font-size: 17.3px; line-height: 24px; margin-bottom: 8px; color: #555; white-space: nowrap; }
.pr-col:last-child span { margin-right: 6px; }
.pr-rows { background: #cbcbcb; border-right: 2px solid #5e5e5e; padding-top: 26px; display: flex; flex-direction: column; gap: 12px; }
.pr-row { display: flex; height: 74px; }
.pr-row-last { margin-top: 30px; }
.pr-row .rot { width: 26px; height: 74px; line-height: 26px; margin-right: 8px; }
.pr-main {
  padding: 26px 0 0 25px;
  display: grid;
  grid-template-columns: 74px 74px 74px 104px;
  grid-template-rows: 74px 74px 74px 104px;
  gap: 12px;
}
.pr-main .c:nth-child(4n) { justify-self: end; }
.pr-main .c:nth-child(n+13) { align-self: end; }
.c { width: 74px; height: 74px; overflow: visible; }
.sel { outline: 2px solid #fff; outline-offset: 4px; }

/* scrollbar */
.scrollbar { width: 29px; display: flex; flex-direction: column; border-left: 2px solid #8a8a8a; background: #c8c8c8; }
.sb-up { height: 34px; flex: none; display: flex; align-items: center; justify-content: center; background: #dcdcdc; }
.sb-tri { width: 0; height: 0; border-left: 7px solid transparent; border-right: 7px solid transparent; border-bottom: 14px solid #333; }
.sb-thumb { flex: 1; border-radius: 13px 13px 0 0; background: linear-gradient(90deg, #8299bc, #94a8c6 25%, #7288ac 65%, #55698d); border-top: 1px solid #64799a; }

/* right scene */
.scene-right { flex: 1; min-width: 0; display: flex; flex-direction: column; }
.sr-strip { height: 33px; flex: none; }
.sr-tools { height: 34px; flex: none; display: flex; align-items: center; padding-left: 21px; font-size: 17.5px; background: linear-gradient(#ececec, #cfcfcf); border-top: 2px solid #8e8e8e; border-bottom: 2px solid #8e8e8e; overflow: hidden; }
.sr-giz { width: 102px; flex: none; height: 100%; padding: 0 9px 0 10px; display: flex; align-items: center; justify-content: space-between; border-left: 1px solid #a8a8a8; border-right: 1px solid #a8a8a8; }
.sr-search { display: flex; align-items: center; gap: 1px; height: 27px; width: 70px; margin-left: 15px; padding-left: 6px; flex: none; border: 2px solid #999; border-radius: 14px 0 0 14px; background: #d4d4d4; }

/* annotations over everything */
.redline { position: absolute; left: 1036px; top: 0; width: 8px; height: 1097px; background: #ed1c24; }
.annot { position: absolute; left: 0; top: 0; pointer-events: none; }
```
